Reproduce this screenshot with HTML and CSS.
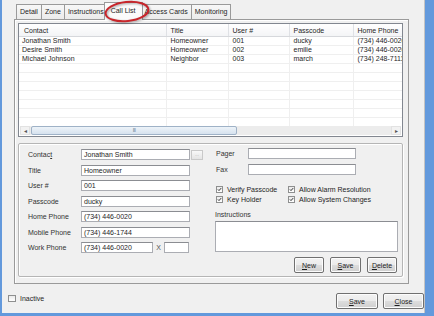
FILE: index.html
```html
<!DOCTYPE html>
<html lang="en">

<head>
    <meta charset="UTF-8">
    <title>Call List</title>
    <link rel="stylesheet" href="styles.css">
</head>

<body>
    <div class="window">
        <div class="tabs">
            <div class="tab">Detail</div>
            <div class="tab">Zone</div>
            <div class="tab">Instructions</div>
            <div class="tab active">Call List</div>
            <div class="tab">Access Cards</div>
            <div class="tab">Monitoring</div>
        </div>

        <div class="panel">
            <div class="listview">
                <div class="list-scroll">
                    <table class="grid">
                        <colgroup>
                            <col class="c-contact">
                            <col class="c-title">
                            <col class="c-user">
                            <col class="c-pass">
                            <col class="c-phone">
                        </colgroup>
                        <thead>
                            <tr>
                                <th>Contact</th>
                                <th>Title</th>
                                <th>User #</th>
                                <th>Passcode</th>
                                <th>Home Phone</th>
                            </tr>
                        </thead>
                        <tbody>
                            <tr><td>Jonathan Smith</td><td>Homeowner</td><td>001</td><td>ducky</td><td>(734) 446-0020</td></tr>
                            <tr><td>Desire Smith</td><td>Homeowner</td><td>002</td><td>emilie</td><td>(734) 446-0020</td></tr>
                            <tr><td>Michael Johnson</td><td>Neighbor</td><td>003</td><td>march</td><td>(734) 248-7111</td></tr>
                            <tr><td></td><td></td><td></td><td></td><td></td></tr>
                            <tr><td></td><td></td><td></td><td></td><td></td></tr>
                            <tr><td></td><td></td><td></td><td></td><td></td></tr>
                            <tr><td></td><td></td><td></td><td></td><td></td></tr>
                            <tr><td></td><td></td><td></td><td></td><td></td></tr>
                            <tr><td></td><td></td><td></td><td></td><td></td></tr>
                            <tr><td></td><td></td><td></td><td></td><td></td></tr>
                        </tbody>
                    </table>
                </div>
                <div class="hscroll">
                    <div class="sb-btn">&#9666;</div>
                    <div class="sb-track">
                        <div class="sb-thumb">III</div>
                    </div>
                    <div class="sb-btn">&#9656;</div>
                </div>
            </div>

            <div class="groupbox">
                <div class="col-left">
                    <div class="row">
                        <label class="lbl">Contac<u>t</u></label>
                        <div class="input w-full">Jonathan Smith</div>
                        <div class="pick">&middot;&middot;</div>
                    </div>
                    <div class="row">
                        <label class="lbl">Title</label>
                        <div class="input w-full">Homeowner</div>
                    </div>
                    <div class="row">
                        <label class="lbl">User #</label>
                        <div class="input w-full">001</div>
                    </div>
                    <div class="row">
                        <label class="lbl">Passcode</label>
                        <div class="input w-full">ducky</div>
                    </div>
                    <div class="row">
                        <label class="lbl">Home Phone</label>
                        <div class="input w-full">(734) 446-0020</div>
                    </div>
                    <div class="row">
                        <label class="lbl">Mobile Phone</label>
                        <div class="input w-full">(734) 446-1744</div>
                    </div>
                    <div class="row">
                        <label class="lbl">Work Phone</label>
                        <div class="input w-work">(734) 446-0020</div>
                        <span class="ext">X</span>
                        <div class="input w-ext"></div>
                    </div>
                </div>

                <div class="col-right">
                    <div class="row">
                        <label class="lbl-r">Pager</label>
                        <div class="input w-right"></div>
                    </div>
                    <div class="row">
                        <label class="lbl-r">Fax</label>
                        <div class="input w-right"></div>
                    </div>

                    <div class="checks">
                        <div class="check-item"><span class="box"><svg viewBox="0 0 7 7"><path d="M1.3 3.4 L2.8 5 L5.8 1.6"/></svg></span>Verify Passcode</div>
                        <div class="check-item"><span class="box"><svg viewBox="0 0 7 7"><path d="M1.3 3.4 L2.8 5 L5.8 1.6"/></svg></span>Allow Alarm Resolution</div>
                        <div class="check-item"><span class="box"><svg viewBox="0 0 7 7"><path d="M1.3 3.4 L2.8 5 L5.8 1.6"/></svg></span>Key Holder</div>
                        <div class="check-item"><span class="box"><svg viewBox="0 0 7 7"><path d="M1.3 3.4 L2.8 5 L5.8 1.6"/></svg></span>Allow System Changes</div>
                    </div>

                    <div class="instr-label">Instructions</div>
                    <div class="textarea"></div>

                    <div class="actions">
                        <button class="btn"><u>N</u>ew</button>
                        <button class="btn"><u>S</u>ave</button>
                        <button class="btn"><u>D</u>elete</button>
                    </div>
                </div>
            </div>
        </div>

        <div class="footer">
            <div class="inactive"><span class="box"></span>Inactive</div>
            <div class="footer-actions">
                <button class="btn btn-lg"><u>S</u>ave</button>
                <button class="btn btn-lg"><u>C</u>lose</button>
            </div>
        </div>

        <svg class="callout" width="54" height="26" viewBox="0 0 54 26">
            <ellipse cx="27" cy="11.5" rx="21.5" ry="9.5" transform="rotate(-6 27 11.5)"/>
        </svg>
    </div>
</body>

</html>
```

FILE: styles.css
```css
body {
    margin: 0;
    font-family: "Liberation Sans", Arial, sans-serif;
    font-size: 7px;
    color: #1e1e1e;
}

.window {
    position: relative;
    width: 434px;
    height: 316px;
    box-sizing: border-box;
    background: #f0f0f0;
    border-left: 2px solid #6399dc;
    border-right: 9px solid #6399dc;
    border-bottom: 3px solid #6399dc;
    box-shadow: inset -1px 0 0 #c4c4c4;
    display: flex;
    flex-direction: column;
}

/* tabs */
.tabs {
    display: flex;
    align-items: flex-end;
    height: 15px;
    margin: 4px 0 0 14px;
    position: relative;
    z-index: 2;
}

.tab {
    height: 14px;
    line-height: 14px;
    padding: 0 3px;
    border: 1px solid #9a9a9a;
    border-bottom: none;
    margin-right: -1px;
    background: linear-gradient(#f7f7f7, #ebebeb);
    white-space: nowrap;
}

.tab.active {
    height: 17px;
    line-height: 16px;
    margin: 0 -2px -1px -3px;
    padding: 0 6px;
    background: #fbfbfb;
    position: relative;
    z-index: 3;
}

/* tab page */
.panel {
    margin-left: 12px;
    width: 395px;
    height: 265px;
    box-sizing: border-box;
    border: 1px solid #9a9a9a;
    box-shadow: inset 1px 1px 0 #fff;
    padding: 3px 5px 0 3px;
    display: flex;
    flex-direction: column;
    gap: 6px;
}

/* list view */
.listview {
    width: 385px;
    height: 114px;
    box-sizing: border-box;
    border: 1px solid #828790;
    background: #fff;
    display: flex;
    flex-direction: column;
}

.list-scroll {
    flex: 1;
    overflow: hidden;
}

.grid {
    width: 420px;
    table-layout: fixed;
    border-collapse: collapse;
}

.c-contact { width: 147px; }
.c-title { width: 62px; }
.c-user { width: 61px; }
.c-pass { width: 64px; }
.c-phone { width: 86px; }

.grid th {
    height: 12px;
    padding: 0 0 0 4px;
    font-weight: normal;
    text-align: left;
    background: linear-gradient(#ffffff, #f3f4f6);
    border-bottom: 1px solid #d6d8dc;
    border-right: 1px solid #dfe1e5;
    white-space: nowrap;
    overflow: hidden;
}

.grid th:first-child { padding-left: 5px; }

.grid td {
    height: 8px;
    line-height: 8px;
    padding: 0 0 0 4px;
    border-bottom: 1px solid #efefef;
    border-right: 1px solid #efefef;
    white-space: nowrap;
    overflow: hidden;
}

.grid td:first-child { padding-left: 3px; }

.hscroll {
    display: flex;
    height: 9px;
    margin: 0 1px 1px 1px;
    background: #ececec;
}

.sb-btn {
    width: 10px;
    font-size: 6px;
    line-height: 9px;
    text-align: center;
    color: #555;
    background: #f2f2f2;
    border: 1px solid #e2e2e2;
    box-sizing: border-box;
}

.sb-track {
    flex: 1;
    padding-left: 1px;
}

.sb-thumb {
    width: 206px;
    height: 9px;
    box-sizing: border-box;
    border: 1px solid #9fb2c7;
    border-radius: 2px;
    background: linear-gradient(#edf3f9, #d6e2ee);
    text-align: center;
    font-size: 5px;
    line-height: 7px;
    color: #6b7c8d;
    letter-spacing: -0.5px;
}

/* details group */
.groupbox {
    width: 385px;
    box-sizing: border-box;
    border: 1px solid #b5b5b5;
    border-radius: 2px;
    box-shadow: inset 1px 1px 0 #fff, 1px 1px 0 #fff;
    padding: 4px 4px 3px 9px;
    display: flex;
    gap: 12px;
}

.col-left {
    width: 175px;
    margin-top: 1px;
    display: flex;
    flex-direction: column;
    gap: 4.5px;
}

.col-right {
    width: 183px;
    display: flex;
    flex-direction: column;
}

.row {
    display: flex;
    align-items: center;
    height: 11px;
}

.col-right .row + .row { margin-top: 5px; }

.lbl {
    width: 53px;
    color: #333;
}

.lbl-r {
    width: 32px;
    margin-left: 1px;
    color: #333;
}

.input {
    height: 11px;
    box-sizing: border-box;
    border: 1px solid #abadb3;
    border-top-color: #8b8d92;
    background: #fff;
    padding-left: 2px;
    line-height: 9px;
    white-space: nowrap;
    overflow: hidden;
}

.w-full { width: 109px; }
.w-work { width: 72px; }
.w-ext { width: 25px; }
.w-right { width: 108px; }

.ext {
    width: 11px;
    text-align: center;
    color: #555;
}

.pick {
    width: 12px;
    height: 10px;
    margin-left: 1px;
    box-sizing: border-box;
    border: 1px solid #c9c9c9;
    background: linear-gradient(#f8f8f8, #e4e4e4);
    color: #aaa;
    font-size: 6px;
    line-height: 8px;
    text-align: center;
}

.checks {
    display: grid;
    grid-template-columns: 72px 1fr;
    grid-auto-rows: 10px;
    margin: 9px 0 0 1px;
}

.check-item {
    display: flex;
    align-items: center;
    gap: 4px;
    white-space: nowrap;
}

.box {
    width: 7px;
    height: 7px;
    box-sizing: border-box;
    border: 1px solid #8e8f8f;
    background: linear-gradient(#eaeaea, #fff);
    display: inline-block;
}

.box svg {
    display: block;
    width: 5px;
    height: 5px;
}

.box path {
    fill: none;
    stroke: #1d1d1d;
    stroke-width: 1.3;
}

.instr-label {
    height: 8px;
    line-height: 8px;
    margin-top: 7px;
    color: #333;
}

.textarea {
    height: 31px;
    margin-top: 2px;
    box-sizing: border-box;
    border: 1px solid #abadb3;
    border-top-color: #8b8d92;
    background: #fff;
}

.actions {
    display: flex;
    justify-content: flex-end;
    gap: 6px;
    margin: 5px 1px 0 0;
}

.btn {
    width: 30px;
    height: 16px;
    padding: 0;
    font-family: inherit;
    font-size: 7px;
    color: #1e1e1e;
    border: 1px solid #707070;
    border-radius: 2px;
    background: linear-gradient(#f2f2f2 0%, #ebebeb 49%, #dddddd 51%, #cfcfcf 100%);
    box-shadow: inset 0 0 0 1px #fcfcfc;
}

.actions .btn:nth-child(2) { width: 31px; }

/* bottom bar */
.footer {
    flex: 1;
    display: flex;
    justify-content: space-between;
    padding: 9px 1px 0 6px;
}

.inactive {
    display: flex;
    align-items: center;
    gap: 4px;
    height: 7px;
    margin-top: 2px;
}

.inactive .box {
    width: 8px;
    height: 7px;
}

.footer-actions {
    display: flex;
    gap: 5px;
}

.btn-lg {
    width: 42px;
}

.footer-actions .btn-lg:last-child { width: 41px; }

/* red highlight drawn over the tabs */
.callout {
    position: absolute;
    left: 98px;
    top: 0;
    z-index: 10;
    overflow: visible;
    filter: drop-shadow(1px 1.5px 0.8px rgba(0, 0, 0, 0.35));
}

.callout ellipse {
    fill: none;
    stroke: #c8262b;
    stroke-width: 2;
}
```
